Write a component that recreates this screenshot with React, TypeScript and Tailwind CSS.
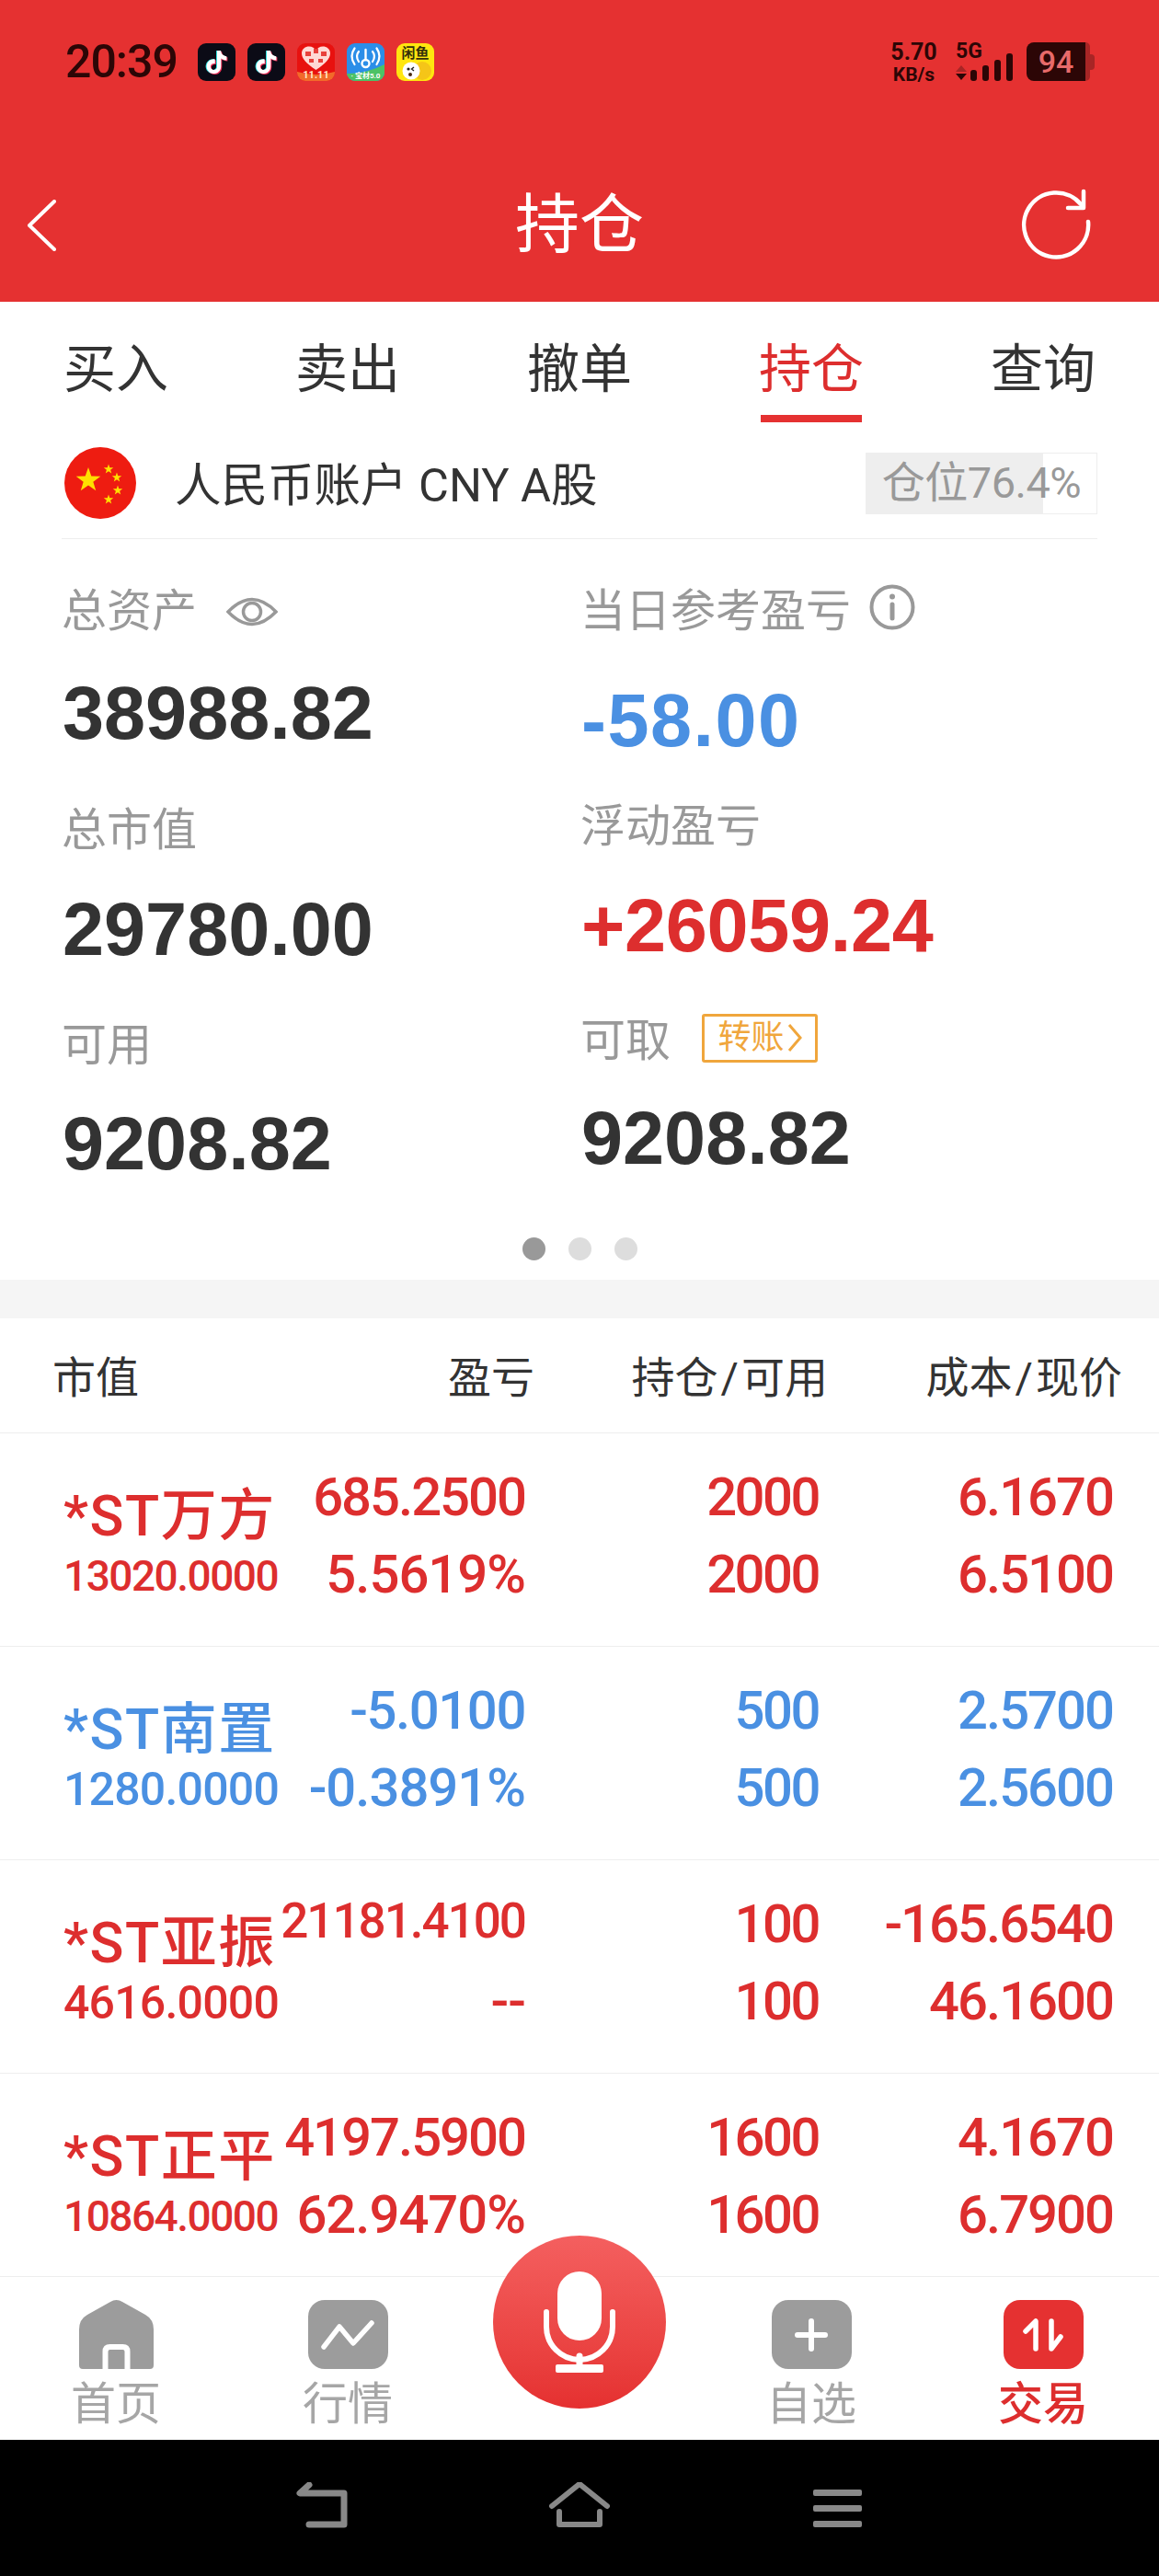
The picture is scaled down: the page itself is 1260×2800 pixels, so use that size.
import React from 'react';
import { SiTiktok } from 'react-icons/si';

interface Position {
  name: string;
  worth: string;
  worthSize: string;
  pnl: string;
  pnlSize: string;
  pct: string;
  held: string;
  cost: string;
  price: string;
  tone: string;
}

const RED = 'text-[#dd2e2e]';
const BLUE = 'text-[#4a90e2]';

const positions: Position[] = [
  { name: '*ST万方', worth: '13020.0000', worthSize: 'text-[46px] tracking-[-1.5px]', pnl: '685.2500', pnlSize: 'text-[58px] tracking-[-2px]', pct: '5.5619%', held: '2000', cost: '6.1670', price: '6.5100', tone: RED },
  { name: '*ST南置', worth: '1280.0000', worthSize: 'text-[50px] tracking-[-0.8px]', pnl: '-5.0100', pnlSize: 'text-[58px] tracking-[-1.4px]', pct: '-0.3891%', held: '500', cost: '2.5700', price: '2.5600', tone: BLUE },
  { name: '*ST亚振', worth: '4616.0000', worthSize: 'text-[50px] tracking-[-0.8px]', pnl: '21181.4100', pnlSize: 'text-[53px] tracking-[-2px] -translate-y-[3px]', pct: '--', held: '100', cost: '-165.6540', price: '46.1600', tone: RED },
  { name: '*ST正平', worth: '10864.0000', worthSize: 'text-[46px] tracking-[-1.5px]', pnl: '4197.5900', pnlSize: 'text-[58px] tracking-[-2px]', pct: '62.9470%', held: '1600', cost: '4.1670', price: '6.7900', tone: RED },
];

const starPoints = (cx: number, cy: number, r: number) =>
  Array.from({ length: 10 }, (_, i) => {
    const radius = i % 2 === 0 ? r : r * 0.4;
    const angle = -Math.PI / 2 + (i * Math.PI) / 5;
    return `${cx + radius * Math.cos(angle)},${cy + radius * Math.sin(angle)}`;
  }).join(' ');

const TikTokTile = () => (
  <div className="relative w-[41px] h-[41px] rounded-[9px] bg-[#0b0b16] shrink-0">
    <SiTiktok className="absolute left-[7px] top-[8px] text-[#2ee6e6]" size={25} />
    <SiTiktok className="absolute left-[9px] top-[9px] text-[#f0305a]" size={25} />
    <SiTiktok className="absolute left-[8px] top-[8.5px] text-white" size={25} />
  </div>
);

const HeartTile = () => (
  <div className="relative w-[41px] h-[41px] rounded-[9px] bg-[#e8110f] overflow-hidden shrink-0">
    <svg viewBox="0 0 41 41" className="w-[41px] h-[41px]">
      <path d="M20.5 29 C10 22 5 16.5 5 11 C5 6 9 3.5 13 3.5 C16.5 3.5 19 5.5 20.5 8 C22 5.5 24.5 3.5 28 3.5 C32 3.5 36 6 36 11 C36 16.5 31 22 20.5 29Z" fill="#ffd9d5" />
      <path d="M9 9h6v5H9zM18 6h5v5h-5zM26 9h6v5h-6zM13 17h5v4h-5zM23 17h5v4h-5z" fill="#e8413c" />
      <path d="M0 31 Q20.5 37 41 31 V41 H0Z" fill="#f26a2a" />
    </svg>
    <span className="absolute inset-x-0 bottom-0 text-center text-[11px] leading-[13px] font-bold text-[#ffe8c8]">11.11</span>
  </div>
);

const WifiTile = () => (
  <div className="relative w-[41px] h-[41px] rounded-[9px] bg-[#2b8ee8] overflow-hidden shrink-0">
    <svg viewBox="0 0 41 41" className="w-[41px] h-[41px]" fill="none" stroke="#fff" strokeLinecap="round">
      <path d="M0 33 Q22 33 41 23 V41 H0Z" fill="#4cc265" stroke="none" />
      <path d="M13 9 Q9 14 13 20M28 9 Q32 14 28 20" strokeWidth="2.2" />
      <path d="M8.5 5.5 Q2.5 14 8.5 23M32.5 5.5 Q38.5 14 32.5 23" strokeWidth="2.2" />
      <path d="M20.5 7 V18" strokeWidth="2.4" />
      <circle cx="20.5" cy="22" r="4" strokeWidth="2.4" />
    </svg>
    <span className="absolute inset-x-0 bottom-0 text-center text-[8px] leading-[11px] font-bold text-white">· 宝材5.0</span>
  </div>
);

const XianyuTile = () => (
  <div className="relative w-[41px] h-[41px] rounded-[9px] bg-[#ffe60f] overflow-hidden shrink-0">
    <span className="absolute inset-x-0 top-[3px] text-center text-[15px] leading-[16px] font-bold text-[#33300a]">闲鱼</span>
    <svg viewBox="0 0 41 41" className="absolute inset-0 w-[41px] h-[41px]">
      <circle cx="28" cy="30" r="10" fill="#f5c518" />
      <circle cx="16" cy="30" r="9.5" fill="#fff" />
      <circle cx="13" cy="28" r="1.6" fill="#222" />
      <path d="M19 26 l-2.5 2 l2.5 2" stroke="#222" strokeWidth="1.4" fill="none" />
      <circle cx="15" cy="34" r="2" fill="#4a2a10" />
    </svg>
  </div>
);

const StatusBar = () => (
  <div className="h-[162px] pt-[46px] pl-[71px] pr-[70px] flex justify-between items-start text-[#2c0606]">
    <div className="flex items-center">
      <span className="text-[50px] leading-[42px] font-medium tracking-[-1px] w-[144px]">20:39</span>
      <div className="flex gap-[13px]">
        <TikTokTile />
        <TikTokTile />
        <HeartTile />
        <WifiTile />
        <XianyuTile />
      </div>
    </div>
    <div className="flex items-start">
      <div className="flex flex-col items-center w-[51px] font-bold">
        <span className="text-[25px] leading-[22px]">5.70</span>
        <span className="text-[21px] leading-[20px] mt-[3px]">KB/s</span>
      </div>
      <div className="relative w-[64px] h-[42px] ml-[20px]">
        <span className="absolute left-0 top-0 text-[23px] leading-[20px] font-bold">5G</span>
        <svg viewBox="0 0 64 42" className="w-[64px] h-[42px]" fill="#2c0606">
          <path d="M6 25 l6 7 h-12Z" fill="#a82525" />
          <path d="M0 34 h12 l-6 7Z" />
          <rect x="16" y="30" width="7" height="12" rx="3" />
          <rect x="29" y="25" width="7" height="17" rx="3" />
          <rect x="42" y="19" width="7" height="23" rx="3" />
          <rect x="55" y="12" width="7" height="30" rx="3" />
        </svg>
      </div>
      <div className="flex items-center ml-[13px]">
        <div className="w-[64px] h-[42px] rounded-l-[8px] bg-[#2c0606] text-[#e86a6a] text-[34px] leading-[42px] font-medium text-center">94</div>
        <div className="w-[5px] h-[42px] rounded-r-[6px] bg-[#a82525]" />
        <div className="w-[5px] h-[17px] rounded-r-[4px] bg-[#a82525]" />
      </div>
    </div>
  </div>
);

const HeaderBar = () => (
  <div className="h-[166px] grid grid-cols-[1fr_auto_1fr] items-center px-[29px]">
    <svg viewBox="0 0 32 56" className="w-[32px] h-[56px]" fill="none" stroke="#fff" strokeWidth="4" strokeLinecap="round" strokeLinejoin="round">
      <path d="M30 2 L3 28 L30 54" />
    </svg>
    <h1 className="text-[70px] leading-[80px] text-white">持仓</h1>
    <svg viewBox="0 0 78 78" className="w-[78px] h-[78px] justify-self-end mr-[43px] -mt-[4px]" fill="none" stroke="#fff" strokeWidth="4.5" strokeLinecap="round" strokeLinejoin="round">
      <path d="M73 37 A35 35 0 1 1 65 18" />
      <path d="M68 4 V22 H51" />
    </svg>
  </div>
);

const Tabs = () => (
  <div className="grid grid-cols-5 pt-[46px] h-[131px]">
    {['买入', '卖出', '撤单', '持仓', '查询'].map((tab) => {
      const active = tab === '持仓';
      return (
        <div key={tab} className="flex flex-col items-center">
          <span className={`text-[57px] leading-[56px] ${active ? RED : 'text-[#333]'}`}>{tab}</span>
          {active && <div className="w-[110px] h-[8px] mt-[21px] bg-[#e53131]" />}
        </div>
      );
    })}
  </div>
);

const AccountRow = () => (
  <div className="mx-[67px] pl-[3px] pt-[6px] h-[127px] flex items-center justify-between border-b border-[#eee]">
    <div className="flex items-center">
      <svg viewBox="0 0 78 78" className="w-[78px] h-[78px]">
        <circle cx="39" cy="39" r="39" fill="#ee1c11" />
        <polygon points={starPoints(26, 36, 14)} fill="#ffe000" />
        <polygon points={starPoints(48, 24, 5.5)} fill="#ffe000" />
        <polygon points={starPoints(57, 33, 5.5)} fill="#ffe000" />
        <polygon points={starPoints(58, 47, 5.5)} fill="#ffe000" />
        <polygon points={starPoints(48, 57, 5.5)} fill="#ffe000" />
      </svg>
      <span className="ml-[42px] mt-[5px] text-[50.5px] leading-[60px] text-[#333]">人民币账户 CNY A股</span>
    </div>
    <div className="relative w-[252px] h-[67px] border border-[#eee]">
      <div className="h-full w-[192px] bg-[#eee]" />
      <span className="absolute inset-0 flex items-center justify-center text-[47px] tracking-[-0.5px] text-[#999]">仓位76.4%</span>
    </div>
  </div>
);

const Label = ({ children, className = '' }: { children: React.ReactNode; className?: string }) => (
  <div className={`flex items-center h-[48px] -ml-[1px] text-[49px] leading-[48px] text-[#999] ${className}`}>{children}</div>
);

const Amount = ({ value, tone, className = '' }: { value: string; tone: string; className?: string }) => (
  <div className={`h-[80px] text-[81px] leading-[80px] font-bold font-['Liberation_Sans'] ${tone} ${className}`}>{value}</div>
);

const Summary = () => (
  <div className="grid grid-cols-[564px_1fr] pl-[68px] pt-[55px]">
    <div>
      <Label>
        总资产
        <svg viewBox="0 0 56 42" className="w-[56px] h-[42px] ml-[32px]" fill="none" stroke="#999" strokeWidth="3.5">
          <path d="M2 21 Q28 -6 54 21 Q28 48 2 21Z" />
          <circle cx="28" cy="21" r="9.5" />
        </svg>
      </Label>
      <Amount value="38988.82" tone="text-[#333]" className="mt-[46px]" />
      <Label className="mt-[64px]">总市值</Label>
      <Amount value="29780.00" tone="text-[#333]" className="mt-[43px]" />
      <Label className="mt-[63px]">可用</Label>
      <Amount value="9208.82" tone="text-[#333]" className="mt-[42px]" />
    </div>
    <div>
      <Label>
        当日参考盈亏
        <svg viewBox="0 0 50 50" className="w-[50px] h-[50px] ml-[20px] -mt-[10px]" fill="none" stroke="#999" strokeWidth="4" strokeLinecap="round">
          <circle cx="25" cy="25" r="22.5" />
          <path d="M25 22 V37" strokeWidth="5" />
          <circle cx="25" cy="13.5" r="1.5" fill="#999" strokeWidth="3" />
        </svg>
      </Label>
      <Amount value="-58.00" tone={BLUE} className="mt-[54px] tracking-[1.5px]" />
      <Label className="mt-[52px]">浮动盈亏</Label>
      <Amount value="+26059.24" tone={RED} className="mt-[43px] tracking-[-0.3px]" />
      <Label className="mt-[62px]">
        可取
        <span className="ml-[34px] -mt-[8px] w-[126px] h-[53px] flex items-center justify-center border-[3px] border-[#f0a63c] rounded-[3px] text-[36px] leading-[40px] text-[#f0a63c]">
          转账
          <svg viewBox="0 0 16 32" className="w-[16px] h-[32px] ml-[3px]" fill="none" stroke="#f0a63c" strokeWidth="3">
            <path d="M2 2 L14 16 L2 30" />
          </svg>
        </span>
      </Label>
      <Amount value="9208.82" tone="text-[#333]" className="mt-[41px]" />
    </div>
  </div>
);

const Dots = () => (
  <div className="flex justify-center gap-[25px] mt-[62px] mb-[21px]">
    <div className="w-[25px] h-[25px] rounded-full bg-[#999]" />
    <div className="w-[25px] h-[25px] rounded-full bg-[#ddd]" />
    <div className="w-[25px] h-[25px] rounded-full bg-[#ddd]" />
  </div>
);

const TableHeader = () => (
  <div className="grid grid-cols-[242px_282px_319px_320px] pl-[57px] pt-[5px] h-[125px] items-center border-b border-[#eee] text-[47px] leading-[56px] text-[#333]">
    <span>市值</span>
    <span className="text-right">盈亏</span>
    <span className="text-right">持仓<span className="px-[3px]">/</span>可用</span>
    <span className="text-right">成本<span className="px-[3px]">/</span>现价</span>
  </div>
);

const PositionRow = ({ item }: { item: Position }) => (
  <div className={`grid grid-cols-[235px_267px_319px_320px] pl-[69px] h-[232px] border-b border-[#eee] text-right text-[58px] tracking-[-2px] leading-[60px] font-medium shrink-0 ${item.tone}`}>
    <div className="pt-[60px] text-left">
      <div className="h-[60px] text-[61px] leading-[60px] tracking-[1.5px] whitespace-nowrap">{item.name}</div>
      <div className={`h-[50px] mt-[10px] leading-[50px] ${item.worthSize}`}>{item.worth}</div>
    </div>
    <div className="pt-[39px]">
      <div className={`h-[60px] ${item.pnlSize}`}>{item.pnl}</div>
      <div className="h-[60px] mt-[24px] tracking-[-1px]">{item.pct}</div>
    </div>
    <div className="pt-[39px] tracking-[-2.5px]">
      <div className="h-[60px]">{item.held}</div>
      <div className="h-[60px] mt-[24px]">{item.held}</div>
    </div>
    <div className="pt-[39px]">
      <div className="h-[60px]">{item.cost}</div>
      <div className="h-[60px] mt-[24px]">{item.price}</div>
    </div>
  </div>
);

const HomeIcon = () => (
  <svg viewBox="0 0 81 75" className="w-[81px] h-[75px]">
    <path d="M40.5 0 Q44 0 47 2 L72 16 Q81 21 81 32 V71 Q81 75 77 75 H4 Q0 75 0 71 V32 Q0 21 9 16 L34 2 Q37 0 40.5 0Z" fill="#9c9c9c" />
    <path d="M28.5 75 V56 Q28.5 51 33.5 51 H47.5 Q52.5 51 52.5 56 V75" fill="none" stroke="#fff" strokeWidth="6" />
  </svg>
);

const MarketIcon = () => (
  <div className="w-[87px] h-[75px] rounded-[18px] bg-[#9c9c9c] flex items-center justify-center">
    <svg viewBox="0 0 58 32" className="w-[58px] h-[32px]" fill="none" stroke="#fff" strokeWidth="5.5" strokeLinecap="round" strokeLinejoin="round">
      <path d="M3 29 L20 7 L35 25 L55 3" />
    </svg>
  </div>
);

const PlusIcon = () => (
  <div className="w-[87px] h-[75px] rounded-[18px] bg-[#9c9c9c] flex items-center justify-center">
    <svg viewBox="0 0 36 36" className="w-[36px] h-[36px]" fill="none" stroke="#fff" strokeWidth="6" strokeLinecap="round">
      <path d="M18 3 V33 M3 18 H33" />
    </svg>
  </div>
);

const TradeIcon = () => (
  <div className="w-[87px] h-[75px] rounded-[18px] bg-[#e53131] flex items-center justify-center">
    <svg viewBox="0 0 44 36" className="w-[44px] h-[36px]" fill="none" stroke="#fff" strokeWidth="5.5" strokeLinecap="round" strokeLinejoin="round">
      <path d="M3 14 L14 3 V33" />
      <path d="M31 3 V33 L41 20" />
    </svg>
  </div>
);

const NavItem = ({ icon, label, active }: { icon: React.ReactNode; label: string; active?: boolean }) => (
  <div className="flex flex-col items-center pt-[25px]">
    {icon}
    <span className={`mt-[15px] text-[49px] leading-[48px] ${active ? `${RED} font-medium` : 'text-[#a6a6a6]'}`}>{label}</span>
  </div>
);

const BottomNav = () => (
  <nav className="relative h-[178px] shrink-0 grid grid-cols-5 bg-white border-t border-[#eee]">
    <NavItem icon={<HomeIcon />} label="首页" />
    <NavItem icon={<MarketIcon />} label="行情" />
    <div />
    <NavItem icon={<PlusIcon />} label="自选" />
    <NavItem icon={<TradeIcon />} label="交易" active />
    {/* voice button sits over the list and the tab bar */}
    <div className="absolute left-[536px] -top-[45px] w-[188px] h-[188px] rounded-full bg-gradient-to-b from-[#f45f5f] to-[#e53030] flex items-center justify-center">
      <svg viewBox="0 0 78 110" className="w-[78px] h-[110px]" fill="none" stroke="#fff" strokeLinecap="round">
        <rect x="15" y="0" width="48" height="75" rx="24" fill="#fff" stroke="none" />
        <path d="M3 44 V60 A36 36 0 0 0 75 60 V44" strokeWidth="6" />
        <path d="M39 92 V104" strokeWidth="7" />
        <rect x="13" y="101" width="52" height="9" rx="2" fill="#fff" stroke="none" />
      </svg>
    </div>
  </nav>
);

const SystemNav = () => (
  <div className="h-[148px] shrink-0 bg-black">
    <div className="grid grid-cols-[322px_275px_287px_53px] pt-[46px]">
      <div />
      <svg viewBox="0 0 56 50" className="w-[56px] h-[50px]" fill="none" stroke="#888" strokeWidth="7" strokeLinejoin="round" strokeLinecap="round">
        <path d="M14 3 L4 12 H52 V46 H14" />
      </svg>
      <svg viewBox="0 0 66 50" className="w-[66px] h-[50px]" fill="none" stroke="#888" strokeWidth="6" strokeLinejoin="round" strokeLinecap="round">
        <path d="M3 26 L33 2 L63 26" />
        <path d="M11 32 V46 H55 V32" />
      </svg>
      <div className="flex flex-col gap-[10px] pt-[8px] w-[53px]">
        <div className="h-[7px] rounded-[2px] bg-[#888]" />
        <div className="h-[7px] rounded-[2px] bg-[#888]" />
        <div className="h-[7px] rounded-[2px] bg-[#888]" />
      </div>
    </div>
  </div>
);

const App: React.FC = () => {
  return (
    <div className="w-[1260px] h-[2800px] flex flex-col overflow-hidden bg-white font-['Roboto','Noto_Sans_CJK_SC',sans-serif]">
      <header className="h-[328px] shrink-0 bg-[#e53131]">
        <StatusBar />
        <HeaderBar />
      </header>
      <Tabs />
      <AccountRow />
      <Summary />
      <Dots />
      <div className="h-[42px] shrink-0 bg-[#f5f5f5]" />
      <TableHeader />
      <div className="flex-1 min-h-0 overflow-hidden">
        {positions.map((item) => (
          <PositionRow key={item.name} item={item} />
        ))}
      </div>
      <BottomNav />
      <SystemNav />
    </div>
  );
};

export default App;
